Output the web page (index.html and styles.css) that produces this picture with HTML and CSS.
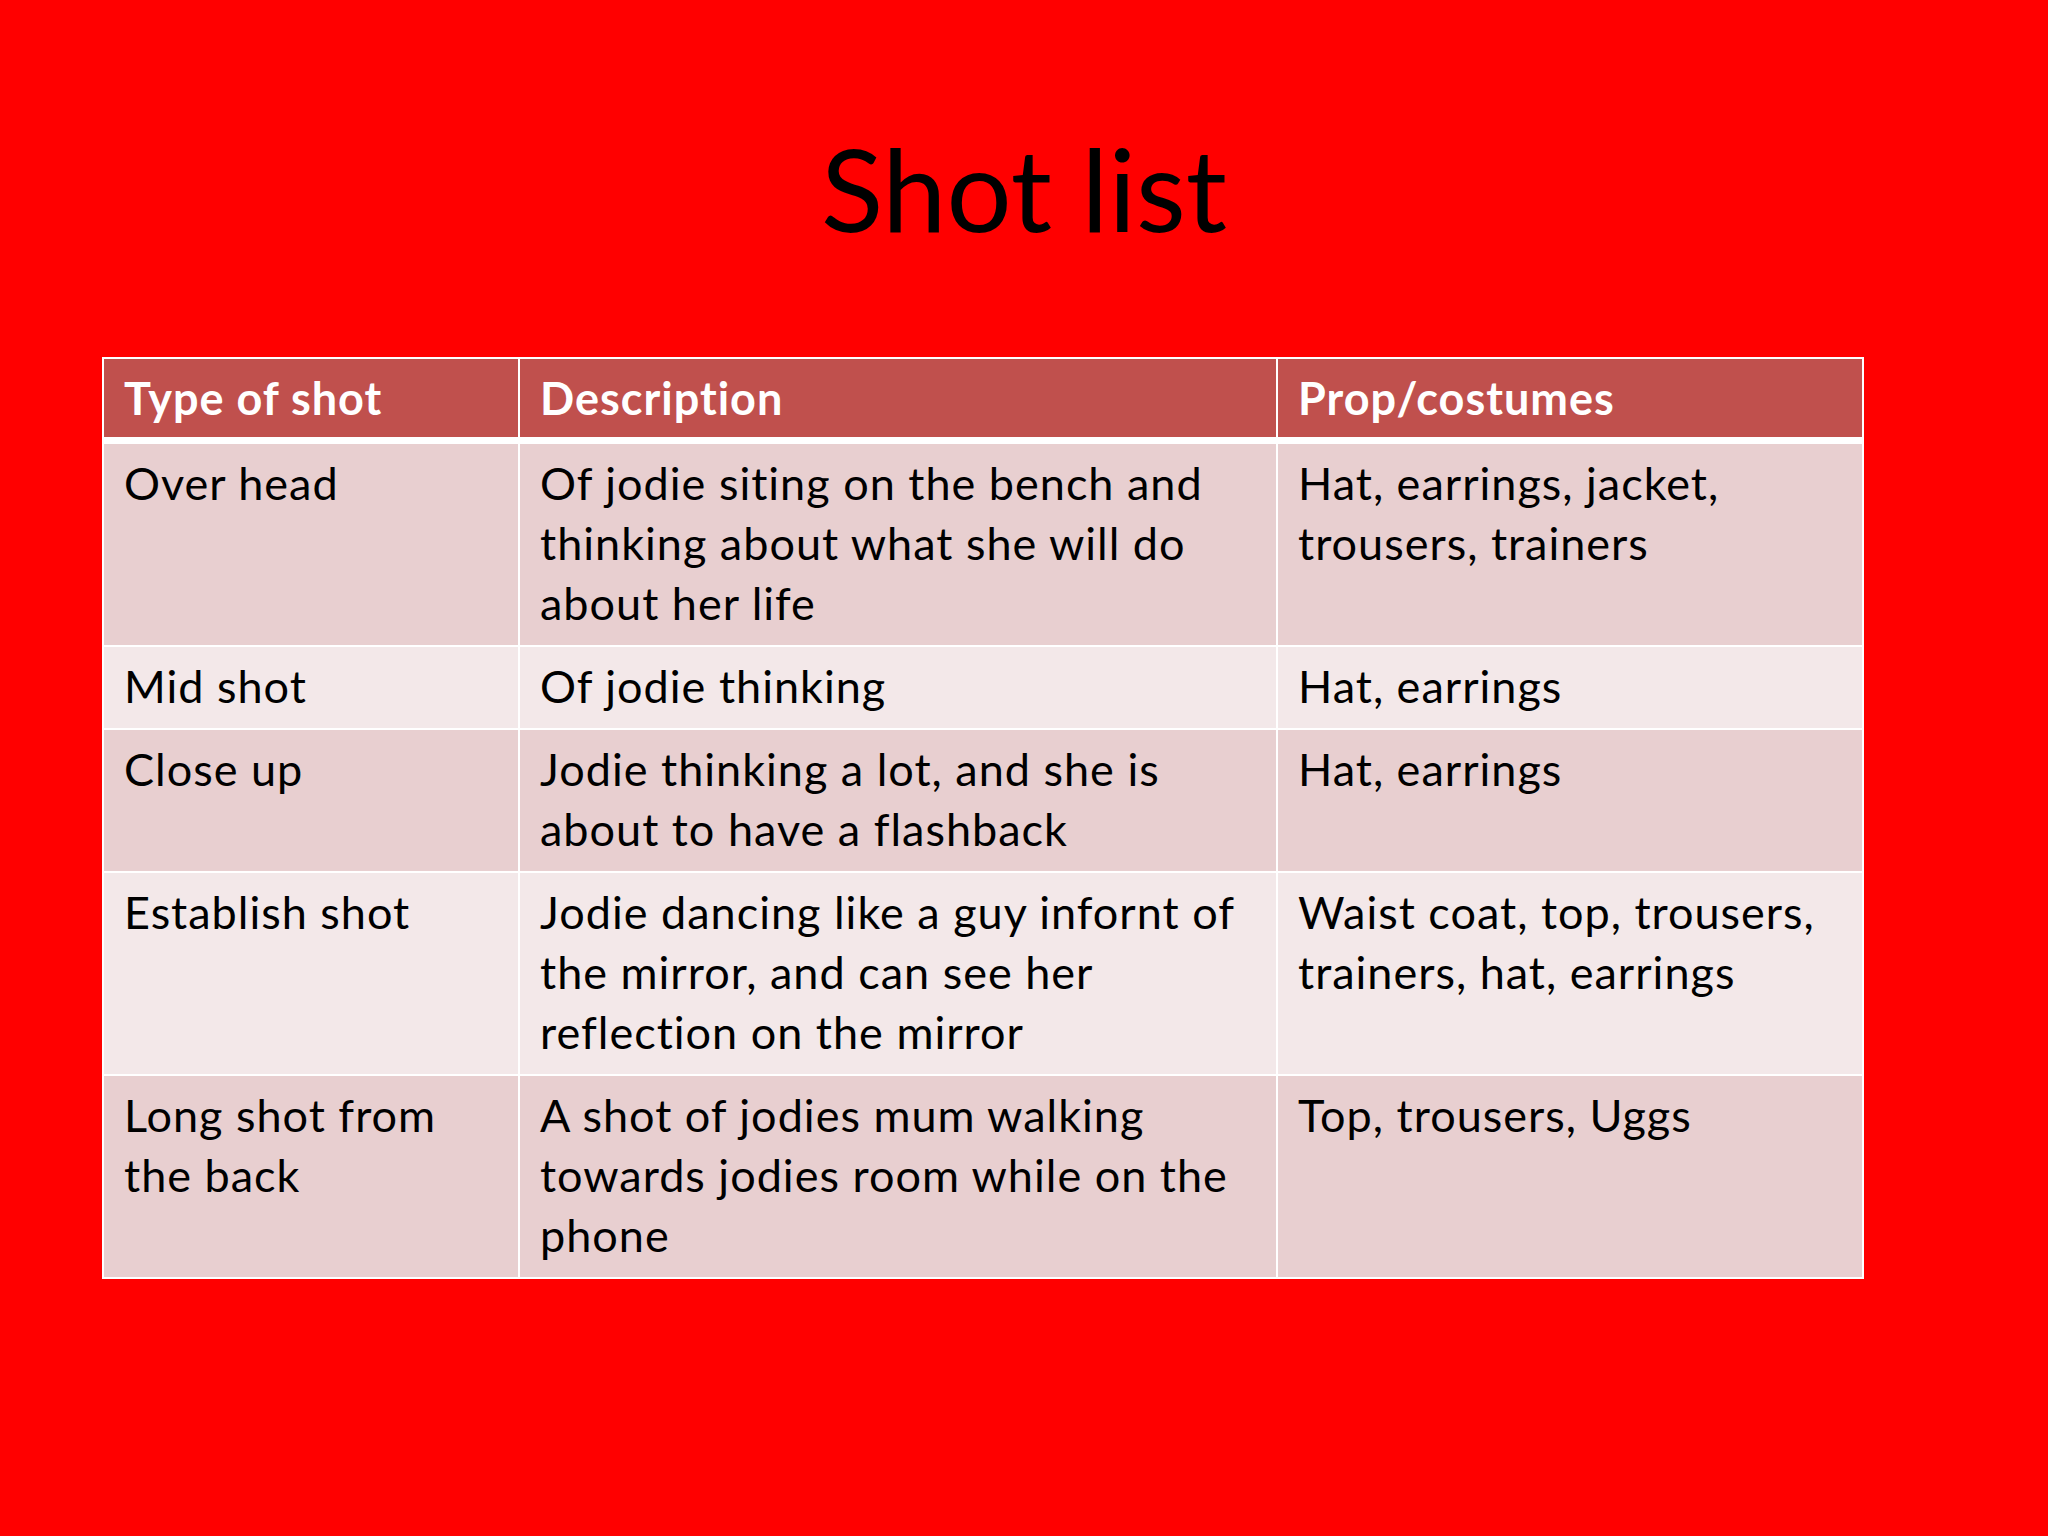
FILE: index.html
```html
<!DOCTYPE html>
<html lang="en">
<head>
<meta charset="utf-8">
<title>Shot list</title>
<link rel="stylesheet" href="styles.css">
</head>
<body>
<main class="slide">
  <h1 class="title">Shot list</h1>
  <table class="shots">
    <colgroup>
      <col class="c1">
      <col class="c2">
      <col class="c3">
    </colgroup>
    <thead>
      <tr>
        <th>Type of shot</th>
        <th>Description</th>
        <th>Prop/costumes</th>
      </tr>
    </thead>
    <tbody>
      <tr class="odd">
        <td>Over head</td>
        <td>Of jodie siting on the bench and<br>thinking about what she will do<br>about her life</td>
        <td>Hat, earrings, jacket,<br>trousers, trainers</td>
      </tr>
      <tr class="even">
        <td>Mid shot</td>
        <td>Of jodie thinking</td>
        <td>Hat, earrings</td>
      </tr>
      <tr class="odd">
        <td>Close up</td>
        <td>Jodie thinking a lot, and she is<br>about to have a flashback</td>
        <td>Hat, earrings</td>
      </tr>
      <tr class="even">
        <td>Establish shot</td>
        <td>Jodie dancing like a guy infornt of<br>the mirror, and can see her<br>reflection on the mirror</td>
        <td>Waist coat, top, trousers,<br>trainers, hat, earrings</td>
      </tr>
      <tr class="odd">
        <td>Long shot from<br>the back</td>
        <td>A shot of jodies mum walking<br>towards jodies room while on the<br>phone</td>
        <td>Top, trousers, Uggs</td>
      </tr>
    </tbody>
  </table>
</main>
</body>
</html>
```

FILE: styles.css
```css
html, body {
  margin: 0;
  padding: 0;
}

body {
  background: #ff0000;
  width: 2048px;
  height: 1536px;
  overflow: hidden;
  font-family: Lato, "Open Sans", sans-serif;
  font-variant-ligatures: none;
  color: #000;
}

.slide {
  display: flex;
  flex-direction: column;
  align-items: flex-start;
  padding: 130px 0 0 102px;
}

.title {
  align-self: stretch;
  margin: 0 0 112px -102px;
  font-weight: 400;
  font-size: 115px;
  line-height: 115px;
  text-align: center;
}

.shots {
  border-collapse: collapse;
  border: 2px solid #fff;
  font-size: 45px;
  line-height: 60px;
  letter-spacing: 1px;
  white-space: nowrap;
}

.c1 { width: 416px; }
.c2 { width: 758px; }
.c3 { width: 586px; }

.shots th,
.shots td {
  text-align: left;
  vertical-align: top;
  border: 2px solid #fff;
  padding: 9px 20px 12px 20px;
}

.shots th {
  background: #c0504d;
  color: #fff;
  font-weight: 700;
  padding-top: 9px;
  padding-bottom: 9px;
  border-bottom: 7px solid #fff;
}

.odd td {
  background: #e8cfd0;
}

.even td {
  background: #f3e8e9;
}
```
